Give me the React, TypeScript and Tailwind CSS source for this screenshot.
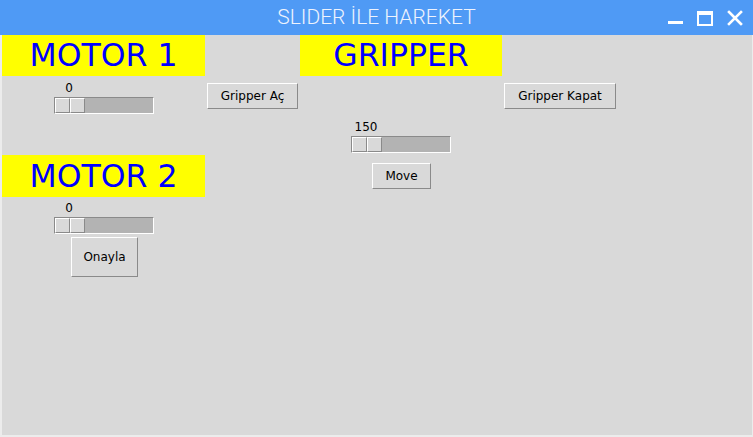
import React from "react";

function Slider({ value }: { value: string }) {
  return (
    <div className="flex flex-col w-[100px]">
      <div className="w-[30px] h-[14px] leading-[14px] text-center text-[12px] text-black">{value}</div>
      <div className="mt-[2px] w-[100px] h-[17px] flex bg-[#b3b3b3] border-t border-l border-t-[#8a8a8a] border-l-[#8a8a8a] border-b border-r border-b-white border-r-white">
        <div className="w-[15px] h-full bg-[#d9d9d9] border-t border-l border-t-white border-l-white border-b border-r border-b-[#8a8a8a] border-r-[#8a8a8a]" />
        <div className="w-[15px] h-full bg-[#d9d9d9] border-t border-l border-t-white border-l-white border-b border-r border-b-[#8a8a8a] border-r-[#8a8a8a]" />
      </div>
    </div>
  );
}

function Btn({ label, w, h }: { label: string; w: string; h: string }) {
  return (
    <div
      className={`${w} ${h} flex items-center justify-center bg-[#d9d9d9] text-[12px] text-black border-t border-l border-t-white border-l-white border-b border-r border-b-[#8a8a8a] border-r-[#8a8a8a]`}
    >
      {label}
    </div>
  );
}

function Label({ text }: { text: string }) {
  return (
    <div className="w-full h-full bg-[#ffff00] text-[#0000ff] text-[31.5px] flex items-center justify-center leading-none pt-[1px]">
      {text}
    </div>
  );
}

export default function App() {
  return (
    <div
      className="w-[753px] h-[437px] flex flex-col overflow-hidden"
      style={{ fontFamily: '"DejaVu Sans", sans-serif' }}
    >
      <div className="h-[35px] bg-[#4f9af5] flex items-center relative">
        <div
          className="flex-1 text-center text-[21px] font-light text-[#eef3fd] pt-[1px]"
          style={{ fontFamily: 'Roboto, sans-serif' }}
        >
          SLIDER İLE HAREKET
        </div>
        <div className="absolute right-0 top-0 h-[35px] flex items-start">
          <svg width="93" height="35" viewBox="0 0 93 35">
            <rect x="8" y="21" width="15" height="3" fill="white" />
            <rect x="38" y="12" width="14" height="13" fill="none" stroke="white" strokeWidth="2" />
            <rect x="37" y="11" width="16" height="4" fill="white" />
            <path d="M69 12 L81 24 M81 12 L69 24" stroke="white" strokeWidth="2.6" strokeLinecap="square" />
          </svg>
        </div>
      </div>
      <div className="flex-1 bg-[#d9d9d9] border-l-2 border-r border-b-2 border-l-[#ececec] border-r-[#ececec] border-b-[#ececec]">
        <div className="grid grid-cols-[203px_95px_202px_115px] grid-rows-[41px_41px_38px_42px_40px_40px]">
          <div className="col-start-1 row-start-1">
            <Label text="MOTOR 1" />
          </div>
          <div className="col-start-3 row-start-1">
            <Label text="GRIPPER" />
          </div>
          <div className="col-start-1 row-start-2 pl-[52px] pt-[5px]">
            <Slider value="0" />
          </div>
          <div className="col-start-2 row-start-2 pl-[2px] pt-[7px]">
            <Btn label="Gripper Aç" w="w-[91px]" h="h-[26px]" />
          </div>
          <div className="col-start-4 row-start-2 pl-[2px] pt-[7px]">
            <Btn label="Gripper Kapat" w="w-[112px]" h="h-[26px]" />
          </div>
          <div className="col-start-3 row-start-3 pl-[51px] pt-[3px]">
            <Slider value="150" />
          </div>
          <div className="col-start-1 row-start-4">
            <Label text="MOTOR 2" />
          </div>
          <div className="col-start-3 row-start-4 pl-[72px] pt-[8px]">
            <Btn label="Move" w="w-[59px]" h="h-[26px]" />
          </div>
          <div className="col-start-1 row-start-5 pl-[52px] pt-[4px]">
            <Slider value="0" />
          </div>
          <div className="col-start-1 row-start-6 pl-[69px]">
            <Btn label="Onayla" w="w-[67px]" h="h-[40px]" />
          </div>
        </div>
      </div>
    </div>
  );
}
